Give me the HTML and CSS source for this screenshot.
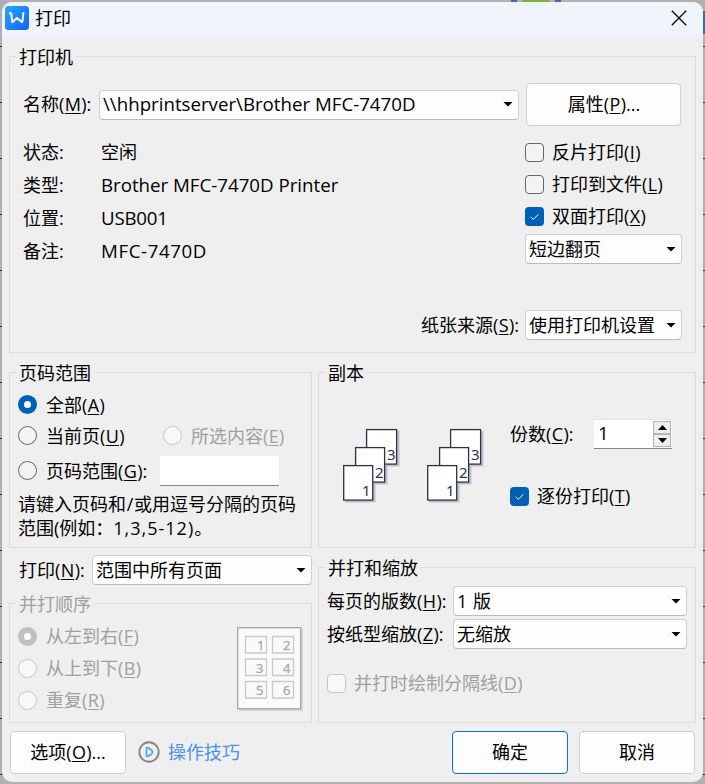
FILE: index.html
```
<!DOCTYPE html>
<html lang="zh-CN">
<head>
<meta charset="utf-8">
<title>打印</title>
<link rel="stylesheet" href="styles.css">
</head>
<body>
<svg width="0" height="0" class="defs" aria-hidden="true">
  <defs>
    <g id="pages">
      <g fill="#bfc2ca"><path d="M25 3h31.500v35.500H25zM14 21h30.500v35.500H14zM2 39h30.500v35.500H2z"/></g>
      <g fill="#fff" stroke="#2b3244" stroke-width="1.300">
        <rect x="23.600" y="1.600" width="30" height="34.500"/>
        <rect x="12.600" y="19.600" width="29" height="34.500"/>
        <rect x="0.700" y="37.600" width="29" height="34.500"/>
      </g>
      <g class="page-num"><text x="44" y="32">3</text><text x="32" y="50">2</text><text x="19" y="68">1</text></g>
    </g>
  </defs>
</svg>
<div class="dialog">
  <header class="titlebar">
    <svg width="24" height="24" viewBox="0 0 24 24"><defs><linearGradient id="lg" x1="0" y1="0" x2="1" y2="1"><stop offset="0" stop-color="#22a7ff"/><stop offset="1" stop-color="#1462fb"/></linearGradient></defs><rect width="24" height="24" rx="3.500" fill="url(#lg)"/><path d="M4 7.200h2.200l1.100 9.300 4.700-4.800 5.300 4.800 1.200-10.300" fill="none" stroke="#fff" stroke-width="1.900" stroke-linejoin="bevel"/></svg>
    <span class="title">打印</span>
    <svg class="close" width="16" height="16" viewBox="0 0 16 16"><path d="M.8.8l14.400 14.400M15.200.8L.8 15.200" stroke="#111" stroke-width="1.400"/></svg>
  </header>

  <main class="content">
    <section class="group printer">
      <h2 class="legend">打印机</h2>
      <div class="name-row">
        <label class="name-label">名称(<u>M</u>):</label>
        <div class="combo name-combo"><span class="latin">\\hhprintserver\Brother MFC-7470D</span><i class="arrow"></i></div>
        <button class="button props">属性(<u>P</u>)...</button>
      </div>
      <div class="printer-cols">
        <dl class="info">
          <dt>状态:</dt><dd>空闲</dd>
          <dt>类型:</dt><dd class="latin">Brother MFC-7470D Printer</dd>
          <dt>位置:</dt><dd class="latin port">USB001</dd>
          <dt>备注:</dt><dd class="latin note">MFC-7470D</dd>
        </dl>
        <div class="options">
          <label class="check-row"><i class="check"></i>反片打印(<u>I</u>)</label>
          <label class="check-row"><i class="check"></i>打印到文件(<u>L</u>)</label>
          <label class="check-row"><i class="check on"><svg width="19" height="19"><path d="M5.700 9.800l2.600 2.600 5-5" fill="none" stroke="#fff"/></svg></i>双面打印(<u>X</u>)</label>
          <div class="combo">短边翻页<i class="arrow"></i></div>
        </div>
      </div>
      <div class="source-row">
        <label class="source-label">纸张来源(<u>S</u>):</label>
        <div class="combo">使用打印机设置<i class="arrow"></i></div>
      </div>
    </section>

    <div class="columns">
      <div class="left-col">
        <section class="group range">
          <h2 class="legend">页码范围</h2>
          <label class="radio-row"><i class="radio on"></i>全部(<u>A</u>)</label>
          <div class="pair">
            <label class="radio-row current"><i class="radio"></i>当前页(<u>U</u>)</label>
            <label class="radio-row off"><i class="radio"></i>所选内容(<u>E</u>)</label>
          </div>
          <div class="pair pages-row">
            <label class="radio-row pages-label"><i class="radio"></i>页码范围(<u>G</u>):</label>
            <span class="field"></span>
          </div>
          <p class="hint">请键入页码和<span class="slash">/</span>或用逗号分隔的页码<br>范围(例如：<span class="nums">1,3,5-12)</span>。</p>
        </section>
        <div class="print-row">
          <label class="print-label">打印(<u>N</u>):</label>
          <div class="combo">范围中所有页面<i class="arrow"></i></div>
        </div>
        <section class="group order off">
          <h2 class="legend">并打顺序</h2>
          <div class="order-body">
            <div class="order-list">
              <label class="radio-row"><i class="radio on"></i>从左到右(<u>F</u>)</label>
              <label class="radio-row"><i class="radio"></i>从上到下(<u>B</u>)</label>
              <label class="radio-row"><i class="radio"></i>重复(<u>R</u>)</label>
            </div>
            <svg class="sheet" width="66" height="84" viewBox="0 0 66 84">
              <rect x="2" y="2" width="64" height="82" fill="#d8d8d8"/>
              <rect x=".7" y=".7" width="63" height="81" fill="#fafafa" stroke="#a5a5a5" stroke-width="1.300"/>
              <path d="M8.500 9.500h21v16.500h-21zM35.500 9.500h21v16.500h-21zM8.500 32h21v16.500h-21zM35.500 32h21v16.500h-21zM8.500 54.500h21v16.500h-21zM35.500 54.500h21v16.500h-21z" fill="none" stroke="#c9c9c9" stroke-width="1.300"/>
              <g class="sheet-num"><text x="20" y="23">1</text><text x="46" y="23">2</text><text x="19" y="45.500">3</text><text x="46" y="45.500">4</text><text x="19" y="68">5</text><text x="46" y="68">6</text></g>
            </svg>
          </div>
        </section>
      </div>

      <div class="right-col">
        <section class="group copies">
          <h2 class="legend">副本</h2>
          <div class="copies-body">
            <svg class="stack" width="60" height="75"><use href="#pages"/></svg>
            <svg class="stack" width="60" height="75"><use href="#pages"/></svg>
            <div class="copies-form">
              <div class="count-row">
                <label class="count-label">份数(<u>C</u>):</label>
                <div class="spinner"><span class="latin">1</span><div class="steps"><i class="step"><svg width="9" height="5"><path d="M0 5l4.500-5L9 5z"/></svg></i><i class="step"><svg width="9" height="5"><path d="M0 0l4.500 5L9 0z"/></svg></i></div></div>
              </div>
              <label class="check-row"><i class="check on"><svg width="19" height="19"><path d="M5.700 9.800l2.600 2.600 5-5" fill="none" stroke="#fff"/></svg></i>逐份打印(<u>T</u>)</label>
            </div>
          </div>
        </section>
        <section class="group scaling">
          <h2 class="legend">并打和缩放</h2>
          <div class="scale-row"><label class="scale-label">每页的版数(<u>H</u>):</label><div class="combo"><span class="nup">1 版</span><i class="arrow"></i></div></div>
          <div class="scale-row"><label class="scale-label">按纸型缩放(<u>Z</u>):</label><div class="combo">无缩放<i class="arrow"></i></div></div>
          <label class="check-row off divider"><i class="check"></i>并打时绘制分隔线(<u>D</u>)</label>
        </section>
      </div>
    </div>

    <footer class="footer">
      <button class="button">选项(<u>O</u>)...</button>
      <a class="tips"><svg width="22" height="22" viewBox="0 0 22 22"><circle cx="11" cy="11" r="9.700" fill="none" stroke="#858585" stroke-width="1.900"/><path d="M8.500 6.700v8.600h1.500q4.500-2.300 4.500-4.300t-4.500-4.300z" fill="none" stroke="#4a9bff" stroke-width="1.600" stroke-linejoin="round"/></svg><span>操作技巧</span></a>
      <button class="button primary">确定</button>
      <button class="button cancel">取消</button>
    </footer>
  </main>
</div>
</body>
</html>
```
FILE: styles.css
```
* { box-sizing: border-box; margin: 0; padding: 0; }
body {
  width: 705px;
  height: 784px;
  padding: 2px;
  overflow: hidden;
  font: 18px/24px "Open Sans", "Noto Sans CJK SC", sans-serif;
  color: #000;
  background:
    linear-gradient(#85ad35, #85ad35) 523px 0 / 26px 2px no-repeat,
    linear-gradient(90deg, #3c6ea5 0 6px, transparent 6px 44px, #3c6ea5 44px 50px) 511px 0 / 50px 2px no-repeat,
    linear-gradient(#3b6ea5, #3b6ea5) 703px 11px / 2px 23px no-repeat,
    repeating-linear-gradient(#b0b0b0 0 46px, #333 46px 47px, #b0b0b0 47px 56px);
}
.defs { display: block; position: absolute; }
u { margin: 0 .4px; text-decoration: underline; text-decoration-thickness: 1px; text-underline-offset: 2px; }
i { font-style: normal; }
label, button, .combo { white-space: nowrap; }
.dialog {
  width: 701px;
  height: 780px;
  background: #efefef;
  border-radius: 10px;
  overflow: hidden;
}
.titlebar {
  height: 35px;
  padding: 0 16px 3px 3px;
  display: flex;
  align-items: center;
  background: #eef4f9;
}
.title { margin-left: 6px; }
.close { margin-left: auto; }
.content { padding: 19px 7px 0; }

.group { border: 1px solid #dcdcdc; }
.legend {
  width: fit-content;
  height: 24px;
  margin: -12px 0 0 6px;
  padding: 0 3px;
  font-size: 18px;
  line-height: 24px;
  font-weight: 400;
  background: #efefef;
}
.combo {
  display: flex;
  align-items: center;
  width: 157px;
  height: 30px;
  padding: 0 5px 0 3px;
  border: 1px solid #d0d0d0;
  border-bottom-color: #bbb;
  border-radius: 4px;
  background: #fdfdfd;
}
.arrow {
  width: 10px;
  height: 5px;
  margin-left: auto;
  flex: none;
  background: #000;
  clip-path: polygon(0 0, 100% 0, 50% 100%);
}
.button {
  width: 116px;
  height: 43px;
  padding-bottom: 2px;
  font: inherit;
  color: #000;
  border: 1px solid #d0d0d0;
  border-radius: 4px;
  background: #fdfdfd;
}
.latin { font-size: 18.7px; }
.note { letter-spacing: .6px; }
.port { letter-spacing: -.2px; }

.printer { height: 297px; }
.name-row { display: flex; align-items: center; margin: 14px 0 0 13px; height: 43px; }
.name-label { width: 76px; padding-bottom: 2px; }
.name-combo { width: 420px; padding-bottom: 1px; }
.props { width: 155px; margin-left: 7px; padding-left: 1px; }
.printer-cols { display: flex; padding: 10px 0 0 13px; }
.info { display: grid; grid-template-columns: 78px 1fr; grid-auto-rows: 33px; align-items: center; width: 502px; height: 132px; margin-top: -1px; }
.options .check-row:first-child { margin-top: 1px; }
.check-row { display: flex; align-items: center; height: 32px; }
.options .combo { margin-top: 1px; }
.check {
  flex: none;
  width: 19px;
  height: 19px;
  margin-right: 8px;
  border: 1px solid #666;
  border-radius: 4px;
  background: #f3f3f3;
}
.check.on { border: 0; background: #005fb8; }
.check svg { display: block; }
.off { color: #a0a0a0; }
.off .check { border-color: #c6c6c6; background: #f8f8f8; }
.options .check-row { position: relative; top: -1px; }
.source-row { display: flex; align-items: center; justify-content: flex-end; margin-top: 43px; padding-right: 13px; }
.source-label { width: 104px; padding-bottom: 1px; }

.columns { display: flex; gap: 6px; margin-top: 19px; }
.left-col { width: 303px; }
.right-col { width: 378px; }
.range { height: 176px; }
.radio-row { display: flex; align-items: center; height: 31px; }
.radio {
  flex: none;
  width: 19px;
  height: 19px;
  margin: 0 9px 0 8px;
  border: 1px solid #666;
  border-radius: 50%;
  background: #f3f3f3;
}
.radio.on { border: 6px solid #005fb8; background: #fff; }
.off .radio, .off.radio-row .radio { border-color: #c6c6c6; background: #f8f8f8; }
.off .radio.on { border-color: #c0c0c0; background: #fff; }
.range > .radio-row { margin-top: 4px; }
.pair { display: flex; }
.current { width: 145px; }
.pages-label { width: 150px; }
.pages-row { height: 31px; margin-top: 4px; align-items: flex-end; }
.field { width: 119px; height: 30px; background: #fff; border-bottom: 1px solid #868686; }
.hint { margin: 6px 0 0 8px; white-space: nowrap; }
.slash { margin: 0 .7px; }
.nums { letter-spacing: 1px; }
.print-row { display: flex; align-items: center; margin-top: 7px; padding-left: 10px; }
.print-label { width: 73px; padding-bottom: 1px; }
.print-row .combo { width: 220px; }
.order { height: 120px; margin-top: 18px; }
.order-body { display: flex; justify-content: space-between; padding: 4px 8px 0 0; }
.order .radio-row { height: 32px; }
.sheet { margin-top: 7px; }
.sheet-num { font: 13px "Noto Sans", sans-serif; fill: #aaa; stroke: #aaa; stroke-width: .3; }

.copies { height: 176px; }
.copies-body { display: flex; padding-left: 24px; }
.stack { margin: 43px 24px 0 0; }
.page-num { font: 15px "Noto Sans", sans-serif; fill: #2b3244; }
.copies-form { padding-top: 34px; margin-left: -1px; }
.count-row { display: flex; align-items: center; height: 30px; }
.count-label { width: 84px; }
.spinner { display: flex; width: 78px; height: 30px; padding: 1px 1px 0 4px; border-top: 1px solid #e6e6e6; border-bottom: 1px solid #868686; background: #fff; }
.steps { width: 18px; margin-left: auto; height: 26px; }
.step { display: flex; align-items: center; justify-content: center; height: 13px; border: 1px solid #b4b4b4; background: #eee; }
.step svg { display: block; }
.copies-form .check-row { margin-top: 31px; }
.scaling { height: 156px; margin-top: 19px; }
.scaling .legend + .scale-row { margin-top: 6px; }
.scale-row { display: flex; align-items: center; height: 30px; margin: 3px 0 0 8px; }
.scale-label { width: 126px; }
.scale-row .combo { width: 234px; }
.nup { word-spacing: 1px; }
.divider { margin: 18px 0 0 8px; }

.footer { display: flex; align-items: center; margin-top: 8px; padding: 0 1px; }
.tips { display: flex; align-items: center; gap: 8px; margin-left: 12px; color: #4a90f5; }
.tips svg { margin-bottom: 1px; }
.tips span { padding-bottom: 2px; }
.primary { margin-left: auto; border-color: #0078d4; }
.cancel { margin-left: 11px; }
```
